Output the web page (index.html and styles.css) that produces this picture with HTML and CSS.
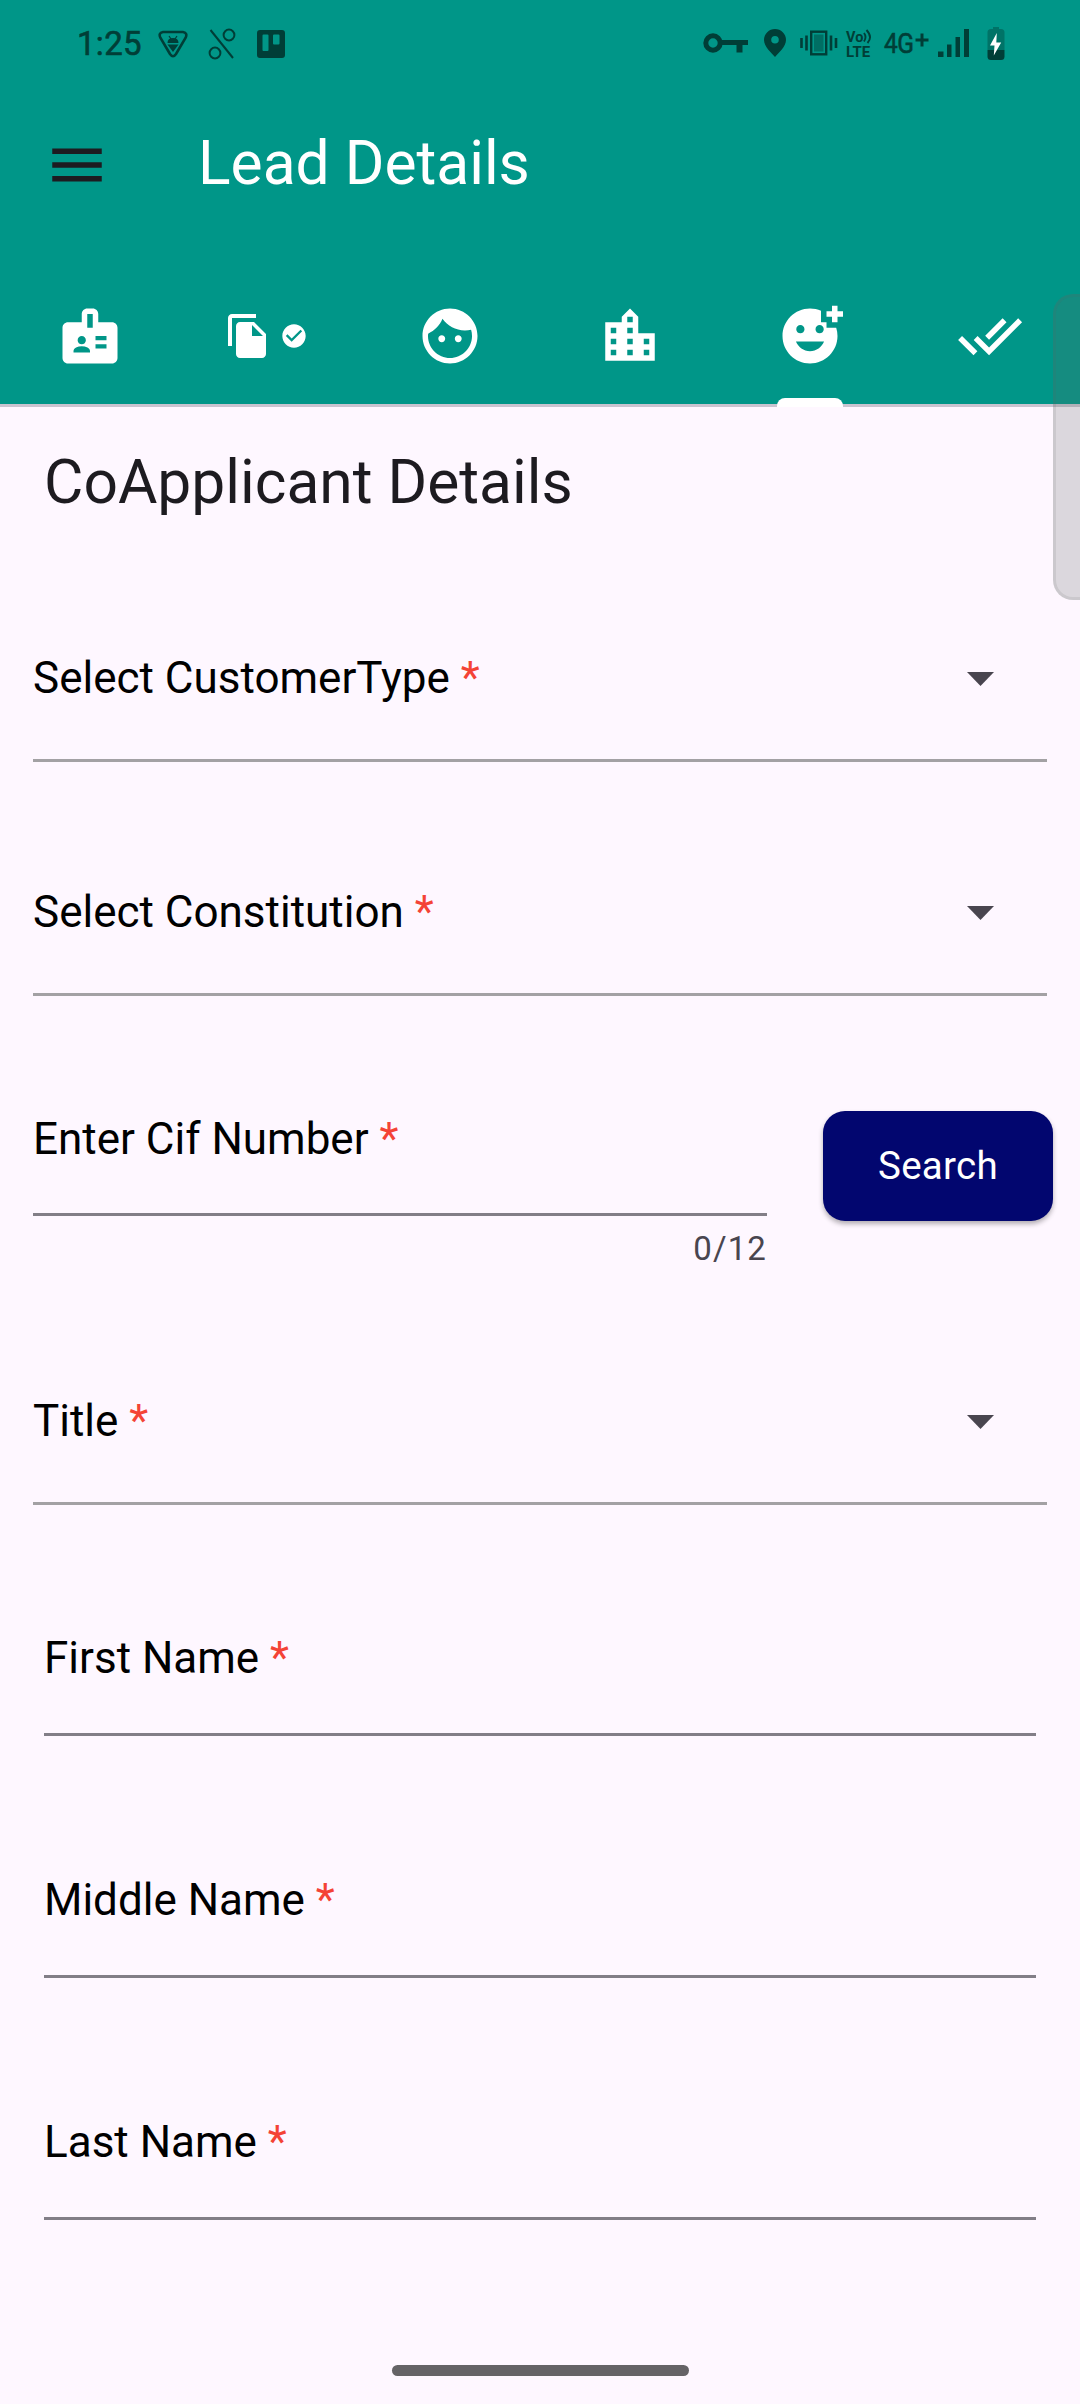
FILE: index.html
```html
<!DOCTYPE html>
<html lang="en">
<head>
<meta charset="utf-8">
<title>Lead Details</title>
<link rel="stylesheet" href="styles.css">
</head>
<body>
<header class="header">
  <div class="status">
    <span class="clock">1:25</span>
    <svg class="st-shield" width="30" height="28" viewBox="0 0 30 28"><path d="M5 2H25Q30 3 27.500 8L18 24Q15 28.500 12 24L2.500 8Q0 3 5 2Z" fill="none" stroke="currentColor" stroke-width="2.600"/><path d="M9.500 13Q9.500 8 15 8T20.500 13Z M9.500 14.500H20.500L15 22Z"/><path d="M11 6l2 3M19 6l-2 3" stroke="currentColor" stroke-width="1.200"/></svg>
    <svg class="st-percent" width="28" height="32" viewBox="0 0 28 32" fill="none" stroke="currentColor" stroke-width="2"><circle cx="21" cy="7" r="5.400"/><circle cx="7" cy="25" r="5.400"/><path d="M2.500 2L25 30"/></svg>
    <svg class="st-board" width="28" height="28" viewBox="0 0 28 28"><path fill-rule="evenodd" d="M3 0H25Q28 0 28 3V25Q28 28 25 28H3Q0 28 0 25V3Q0 0 3 0ZM6.500 4.500Q5.500 4.500 5.500 5.500V20Q5.500 21 6.500 21H10.500Q11.500 21 11.500 20V5.500Q11.500 4.500 10.500 4.500ZM17 4.500Q16 4.500 16 5.500V13.500Q16 14.500 17 14.500H21.500Q22.500 14.500 22.500 13.500V5.500Q22.500 4.500 21.500 4.500Z"/></svg>
    <span class="spacer"></span>
    <svg class="st-key" width="46" height="22" viewBox="0 0 46 22"><circle cx="10" cy="10" r="7.200" fill="none" stroke="currentColor" stroke-width="5"/><path d="M18 7H45V12H39.500V19.500H33.500V12H18Z"/></svg>
    <svg class="st-pin" width="22" height="28" viewBox="0 0 22 28"><path fill-rule="evenodd" d="M11 0A11 11 0 0 1 22 11C22 18 14 24 11 28C8 24 0 18 0 11A11 11 0 0 1 11 0ZM11 7A3.800 3.800 0 1 0 11 14.600A3.800 3.800 0 0 0 11 7Z"/></svg>
    <svg class="st-vibrate" width="38" height="26" viewBox="0 0 38 26"><path d="M1.500 8V18M6.500 5.500V20.500M31 5.500V20.500M36 8V18" stroke="currentColor" stroke-width="2.600"/><rect x="11.200" y="1.700" width="15" height="22.600" fill="none" stroke="currentColor" stroke-width="2.400"/><rect x="14" y="4.500" width="9.500" height="17" opacity=".45"/></svg>
    <span class="volte"><span class="vo">Vo<svg width="9" height="15" viewBox="0 0 9 15" fill="none" stroke="currentColor" stroke-width="1.900"><path d="M1 4Q4 8 1 12.500M3.500 1Q10 8 4.500 14"/></svg></span><span class="lte">LTE</span></span>
    <span class="net"><span class="gen">4G</span><svg width="14" height="14" viewBox="0 0 14 14"><path d="M5.500 .5h3v5h5v3h-5v5h-3v-5h-5v-3h5z"/></svg></span>
    <svg class="st-signal" width="32" height="28" viewBox="0 0 32 28"><path d="M0 22.500H5.500V28H0ZM9 15.500H13.500V28H9ZM17.500 8H22V28H17.500ZM26 0H31V28H26Z"/></svg>
    <svg class="st-battery" width="18" height="34" viewBox="0 0 18 34"><path opacity=".4" d="M6 0H12V2H14Q17.500 2 17.500 5.500V23H.5V5.500Q.5 2 4 2H6Z"/><path d="M.5 23H17.500V29.500Q17.500 33 14 33H4Q.5 33 .5 29.500Z"/><path fill="#fff" d="M9.800 6L3 18.500H7.500L6.800 28.500L14.200 15.500H9.300Z"/></svg>
  </div>
  <div class="appbar">
    <svg class="menu" width="66" height="66" viewBox="0 0 24 24"><path d="M3 18h18v-2H3v2zm0-5h18v-2H3v2zm0-7v2h18V6H3z"/></svg>
    <h1 class="title">Lead Details</h1>
  </div>
  <nav class="tabs">
    <a class="tab"><svg width="66" height="66" viewBox="0 0 24 24"><path fill-rule="evenodd" d="M20 7h-5V4c0-1.100-.9-2-2-2h-2c-1.100 0-2 .9-2 2v3H4c-1.100 0-2 .9-2 2v11c0 1.100.9 2 2 2h16c1.100 0 2-.9 2-2V9c0-1.100-.9-2-2-2zM9 12c.83 0 1.500.67 1.500 1.500S9.830 15 9 15s-1.500-.67-1.500-1.500S8.170 12 9 12zm3 6H6v-.43c0-.6.360-1.150.920-1.390.64-.28 1.340-.43 2.080-.43s1.440.15 2.080.43c.55.24.92.78.92 1.390V18zm1-9h-2V4h2v5zm5 7.500h-4V15h4v1.500zm0-3h-4V12h4v1.500z"/></svg></a>
    <a class="tab tab-docs"><svg width="48" height="48" viewBox="0 0 24 24"><path d="M16 1H4c-1.100 0-2 .9-2 2v14h2V3h12V1zm-1 4l6 6v10c0 1.100-.9 2-2 2H7.990C6.890 23 6 22.100 6 21l.01-14c0-1.100.89-2 1.990-2h7zm-1 7h5.500L14 6.500V12z"/></svg><svg width="28" height="28" viewBox="0 0 24 24"><path d="M12 2C6.480 2 2 6.480 2 12s4.480 10 10 10 10-4.480 10-10S17.520 2 12 2zm-2 15l-5-5 1.410-1.410L10 14.170l7.590-7.590L19 8l-9 9z"/></svg></a>
    <a class="tab"><svg width="66" height="66" viewBox="0 0 24 24"><path d="M9 11.750c-.69 0-1.250.56-1.250 1.250s.56 1.250 1.250 1.250 1.250-.56 1.250-1.250-.56-1.250-1.250-1.250zm6 0c-.69 0-1.250.56-1.250 1.250s.56 1.250 1.250 1.250 1.250-.56 1.250-1.250-.56-1.250-1.250-1.250zM12 2C6.480 2 2 6.480 2 12s4.480 10 10 10 10-4.480 10-10S17.520 2 12 2zm0 18c-4.410 0-8-3.590-8-8 0-.29.020-.58.050-.86 2.360-1.050 4.230-2.980 5.210-5.370C11.070 8.330 14.050 10 17.420 10c.78 0 1.530-.09 2.250-.26.210.71.330 1.470.330 2.260 0 4.410-3.590 8-8 8z"/></svg></a>
    <a class="tab"><svg width="66" height="66" viewBox="0 0 24 24"><path d="M15 11V5l-3-3-3 3v2H3v14h18V11h-6zm-8 8H5v-2h2v2zm0-4H5v-2h2v2zm0-4H5V9h2v2zm6 8h-2v-2h2v2zm0-4h-2v-2h2v2zm0-4h-2V9h2v2zm0-4h-2V5h2v2zm6 12h-2v-2h2v2zm0-4h-2v-2h2v2z"/></svg></a>
    <a class="tab active"><svg width="66" height="66" viewBox="0 0 24 24"><path fill-rule="evenodd" d="M18 9V7h-2V2.840C14.770 2.300 13.420 2 11.990 2 6.470 2 2 6.480 2 12s4.470 10 9.990 10C17.520 22 22 17.520 22 12c0-1.050-.17-2.050-.47-3H18zm-2.500-1c.83 0 1.500.67 1.500 1.500s-.67 1.500-1.500 1.500-1.500-.67-1.500-1.500.67-1.500 1.500-1.500zm-7 0c.83 0 1.500.67 1.500 1.500S9.330 11 8.500 11 7 10.330 7 9.500 7.670 8 8.500 8zm3.500 9.500c-2.330 0-4.310-1.460-5.110-3.500h10.220c-.8 2.040-2.780 3.500-5.110 3.500zM22 3h2v2h-2v2h-2V5h-2V3h2V1h2v2z"/></svg></a>
    <a class="tab"><svg width="66" height="66" viewBox="0 0 24 24"><path d="M18 7l-1.410-1.410-6.340 6.340 1.410 1.410L18 7zm4.240-1.410L11.660 16.170 7.480 12l-1.410 1.410L11.660 19l12-12-1.420-1.410zM.41 13.410L6 19l1.410-1.410L1.830 12 .41 13.410z"/></svg></a>
  </nav>
</header>
<main class="form">
  <h2 class="heading">CoApplicant Details</h2>
  <div class="field select customer"><label>Select CustomerType <b>*</b></label><i class="caret"></i></div>
  <div class="field select constitution"><label>Select Constitution <b>*</b></label><i class="caret"></i></div>
  <div class="cif-row">
    <div class="cif">
      <div class="field input"><label>Enter Cif Number <b>*</b></label></div>
      <span class="counter">0/12</span>
    </div>
    <button class="search">Search</button>
  </div>
  <div class="field select person-title"><label>Title <b>*</b></label><i class="caret"></i></div>
  <div class="field input name first"><label>First Name <b>*</b></label></div>
  <div class="field input name"><label>Middle Name <b>*</b></label></div>
  <div class="field input name"><label>Last Name <b>*</b></label></div>
</main>
<footer class="gesture"><span></span></footer>
<div class="edge-handle"></div>
</body>
</html>
```
FILE: styles.css
```css
* { box-sizing: border-box; }
body {
  margin: 0;
  width: 1080px;
  height: 2404px;
  overflow: hidden;
  display: flex;
  flex-direction: column;
  background: #fef7ff;
  color: #000;
  font-family: Roboto, "Liberation Sans", sans-serif;
}
svg { display: block; flex: none; fill: currentColor; }
svg[fill="none"] { fill: none; }
.header {
  height: 407px;
  flex: none;
  background: #009688;
  border-bottom: 3px solid #c9c4d0;
}

/* Status bar */
.status {
  height: 88px;
  padding-left: 77px;
  display: flex;
  align-items: flex-start;
  color: #003e37;
}
.clock {
  width: 66px;
  margin-top: 25px;
  font-size: 33px;
  line-height: 38px;
  letter-spacing: .3px;
  -webkit-text-stroke: .6px;
}
.st-shield { margin: 30px 0 0 15px; }
.st-percent { margin: 28px 0 0 20px; }
.st-board { margin: 30px 0 0 21px; }
.spacer { flex: 1; }
.st-key { margin-top: 33px; }
.st-pin { margin: 29px 0 0 15px; }
.st-vibrate { margin: 30px 0 0 14px; }
.volte { width: 30px; height: 30px; margin: 30px 0 0 8px; font-weight: 700; }
.vo { display: flex; font-size: 14.500px; line-height: 15px; height: 15px; }
.vo svg { margin-top: -1px; }
.lte { display: block; font-size: 15px; line-height: 14px; }
.net { width: 46px; display: flex; margin: 24px 0 0 8px; }
.gen {
  width: 31px;
  font-size: 28.500px;
  line-height: 40px;
  letter-spacing: -.5px;
  -webkit-text-stroke: .6px;
  transform: scaleX(.86);
  transform-origin: 0 0;
}
.net svg { margin: 9px 0 0 0; }
.st-signal { margin: 29px 0 0 8px; }
.st-battery { margin: 27px 75px 0 17px; }

/* App bar */
.appbar { height: 154px; display: flex; align-items: center; padding-left: 44px; }
.menu { color: #1d1b20; }
.title {
  margin: -3px 0 0 88px;
  color: #fff;
  font-size: 60.500px;
  line-height: 76px;
  font-weight: 400;
}
.tabs { height: 165px; display: flex; color: #fff; }
.tab {
  position: relative;
  flex: 0 0 180px;
  display: flex;
  align-items: flex-start;
  justify-content: center;
  padding-top: 61px;
}
.tab-docs { gap: 8px; padding-right: 8px; padding-top: 70px; }
.tab-docs svg + svg { margin-top: 10px; }
.active::after {
  content: "";
  position: absolute;
  left: 57px;
  bottom: 0;
  width: 66px;
  height: 9px;
  border-radius: 8px 8px 0 0;
  background: #fff;
}

/* Form */
.form { flex: 1; padding: 0 33px; }
.heading {
  margin: 0;
  padding: 38px 11px 0;
  height: 183px;
  color: #1d1b20;
  font-size: 60.500px;
  line-height: 76px;
  font-weight: 400;
}
.field { display: flex; font-size: 44px; line-height: 52px; }
.field b { color: #f44336; font-weight: 400; }
.select {
  height: 172px;
  padding-top: 62px;
  justify-content: space-between;
  border-bottom: 3px solid #a3a1a4;
}
.constitution { margin-top: 62px; }
.caret {
  width: 27px;
  height: 14px;
  margin: 20px 53px 0 0;
  background: #49454f;
  clip-path: polygon(0 0, 100% 0, 50% 100%);
}
.cif-row { display: flex; height: 337px; margin-right: -6px; justify-content: space-between; }
.cif { width: 734px; }
.input { height: 242px; border-bottom: 3px solid #827e87; align-items: flex-end; padding-bottom: 49px; }
.cif .input { height: 220px; padding-bottom: 48px; }
.counter {
  display: block;
  margin-top: 11px;
  text-align: right;
  color: #49454f;
  font-size: 33px;
  line-height: 44px;
  letter-spacing: 1.100px;
}
.search {
  width: 230px;
  height: 110px;
  margin-top: 115px;
  border: 0;
  border-radius: 22px;
  background: #02066f;
  color: #fff;
  font: 400 38.500px/56px Roboto, sans-serif;
  letter-spacing: .28px;
  box-shadow: 0 3px 5px rgba(0, 0, 0, .3);
}
.name { margin: 0 11px; }
.first { height: 231px; }

/* Navigation gesture bar */
.gesture { height: 48px; padding-top: 9px; }
.gesture span {
  display: block;
  width: 297px;
  height: 11px;
  margin: 0 auto;
  border-radius: 6px;
  background: #656366;
}

/* Side panel handle floats over the page at the right edge */
.edge-handle {
  position: absolute;
  right: -20px;
  top: 294px;
  width: 47px;
  height: 306px;
  border: 3px solid rgba(95, 95, 95, .13);
  border-radius: 20px;
  background: rgba(95, 103, 100, .22);
}
```
